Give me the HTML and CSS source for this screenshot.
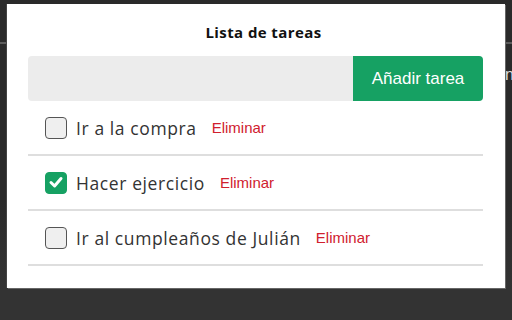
FILE: index.html
```html
<!DOCTYPE html>
<html lang="es">
<head>
<meta charset="utf-8">
<title>Lista de tareas</title>
<link rel="stylesheet" href="styles.css">
</head>
<body>
<div class="backdrop-text">n</div>
<main class="popup">
  <h1 class="title">Lista de tareas</h1>
  <form class="add-form">
    <input class="add-input" type="text" aria-label="Nueva tarea">
    <button class="add-btn" type="button">Añadir tarea</button>
  </form>
  <ul class="tasks">
    <li class="task">
      <span class="check"></span>
      <span class="task-text">Ir a la compra</span>
      <a class="remove">Eliminar</a>
    </li>
    <li class="task">
      <span class="check checked">
        <svg viewBox="0 0 22 22" width="22" height="22"><path d="M6 11.5 L9.6 15 L16 7.5" fill="none" stroke="#fff" stroke-width="3" stroke-linecap="round" stroke-linejoin="round"/></svg>
      </span>
      <span class="task-text">Hacer ejercicio</span>
      <a class="remove">Eliminar</a>
    </li>
    <li class="task">
      <span class="check"></span>
      <span class="task-text">Ir al cumpleaños de Julián</span>
      <a class="remove">Eliminar</a>
    </li>
  </ul>
</main>
</body>
</html>
```
FILE: styles.css
```css
html, body {
  margin: 0;
  padding: 0;
}
body {
  width: 512px;
  height: 320px;
  overflow: hidden;
  position: relative;
  background: linear-gradient(to bottom, #2a2a2a 0, #2a2a2a 42px, #5c5c5c 42px, #5c5c5c 44px, #2a2a2a 44px, #2a2a2a 200px, #333 290px);
  font-family: "Open Sans", "Liberation Sans", sans-serif;
  padding-top: 4px;
  box-sizing: border-box;
}
.backdrop-text {
  position: absolute;
  left: 505px;
  top: 66px;
  color: #ddd;
  font: 16px "Liberation Sans", sans-serif;
}
.popup {
  position: relative;
  margin-left: 7px;
  width: 498px;
  height: 284px;
  background: #fff;
  box-sizing: border-box;
  padding: 18px 22px 0 21px;
  box-shadow: -1px 0 0 #444, 1px 1px 0 #666;
}
.title {
  margin: 0 0 14px;
  text-align: center;
  font-size: 15px;
  letter-spacing: 0.4px;
  line-height: 20px;
  font-weight: 700;
  color: #111;
  padding-left: 16px;
}
.add-form {
  display: flex;
  height: 45px;
  margin: 0;
}
.add-input {
  flex: 1;
  border: none;
  background: #ececec;
  border-radius: 4px 0 0 4px;
  margin: 0;
  padding: 0 10px;
  outline: none;
}
.add-btn {
  width: 130px;
  border: none;
  margin: 0;
  background: #16a163;
  color: #fff;
  border-radius: 0 4px 4px 0;
  font: 17px "Liberation Sans", Arial, sans-serif;
  padding: 0;
}
.tasks {
  list-style: none;
  margin: 0;
  padding: 0;
}
.task {
  display: flex;
  align-items: center;
  height: 53px;
  border-bottom: 2px solid #dedede;
  padding-left: 17px;
}
.check {
  width: 22px;
  height: 22px;
  box-sizing: border-box;
  border: 1.5px solid #555;
  border-radius: 4px;
  background: #efefef;
  margin-right: 9px;
  flex: none;
  display: flex;
}
.check.checked {
  background: #16a163;
  border-color: #16a163;
}
.check.checked svg {
  margin: -1.5px;
}
.task-text {
  font-size: 17.5px;
  letter-spacing: 0.6px;
  color: #333;
  margin-right: 15px;
}
.remove {
  font: 15px "Liberation Sans", Arial, sans-serif;
  color: #d0202e;
}
```
